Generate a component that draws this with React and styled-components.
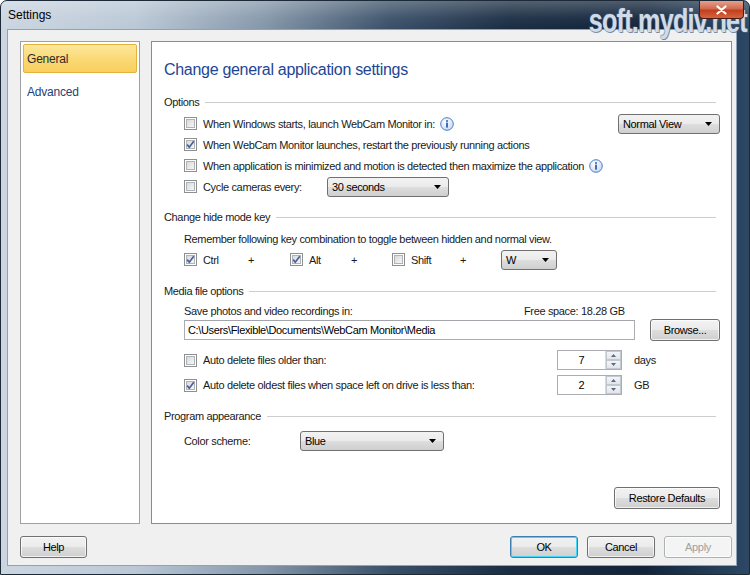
import React from "react";
import styled, { createGlobalStyle } from "styled-components";

const GlobalStyle = createGlobalStyle`
    html, body {
        margin: 0;
        padding: 0;
        background: #ffffff;
    }
    body {
        font-family: "Liberation Sans", Arial, sans-serif;
        font-size: 11px;
        letter-spacing: -0.35px;
        color: #1a1a1a;
    }
`;

const Window = styled.div`
    position: relative;
    width: 750px;
    height: 575px;
    box-sizing: border-box;
    display: flex;
    flex-direction: column;
    border: 1px solid #1c2a38;
    border-radius: 7px 7px 0 0;
    background: linear-gradient(
        90deg,
        #cbd6e1 0%,
        #bac8d6 18%,
        #8597aa 35%,
        #3a5068 52%,
        #1a2d43 68%,
        #12243a 86%,
        #2c4865 100%
    );
    overflow: hidden;
`;

const TitleBar = styled.div`
    height: 28px;
    display: flex;
    align-items: center;
    padding-left: 7px;
    font-size: 12px;
    letter-spacing: 0;
    color: #000;
    background: linear-gradient(
        180deg,
        rgba(255, 255, 255, 0.25) 0%,
        rgba(255, 255, 255, 0.05) 60%,
        rgba(0, 0, 0, 0) 100%
    );
`;

const Watermark = styled.div`
    position: absolute;
    top: 0;
    right: 2px;
    font-family: "Liberation Sans", Arial, sans-serif;
    font-weight: bold;
    font-size: 34px;
    letter-spacing: -1px;
    color: rgba(240, 245, 252, 0.82);
    text-shadow: 0 0 1px #4f6c8e, 1px 1px 0 rgba(70, 100, 130, 0.7), -1px -1px 0 rgba(70, 100, 130, 0.4);
    transform: scaleX(0.74);
    transform-origin: right center;
    pointer-events: none;
`;

const CloseButton = styled.div`
    position: absolute;
    top: 0;
    right: 5px;
    width: 45px;
    height: 18px;
    box-sizing: border-box;
    border: 1px solid #4a1b12;
    border-top: none;
    border-radius: 0 0 4px 4px;
    background: linear-gradient(180deg, #e6a08c 0%, #d26a4f 45%, #c0401f 55%, #d6643f 100%);
    display: flex;
    align-items: center;
    justify-content: center;
`;

const Client = styled.div`
    flex: 1;
    margin: 0 12px 8px 6px;
    background: #f0f0f0;
    border: 1px solid #8ea2b8;
    display: flex;
    flex-direction: column;
    padding: 11px 4px 0 12px;
`;

const MainRow = styled.div`
    height: 483px;
    display: flex;
    gap: 11px;
`;

const Nav = styled.div`
    width: 120px;
    box-sizing: border-box;
    background: #fff;
    border: 1px solid #a0a0a0;
    padding: 2px;
    display: flex;
    flex-direction: column;
    gap: 4px;
`;

const NavItem = styled.div`
    height: 29px;
    box-sizing: border-box;
    display: flex;
    align-items: center;
    padding-left: 3px;
    font-size: 12px;
    letter-spacing: -0.2px;
    border-radius: 2px;
    border: 1px solid ${(p) => (p.$active ? "#e3b13e" : "transparent")};
    background: ${(p) =>
        p.$active
            ? "linear-gradient(180deg, #fde79b 0%, #fbd977 50%, #f9cf5e 100%)"
            : "transparent"};
    color: ${(p) => (p.$active ? "#2a2a2a" : "#1f3f7a")};
`;

const Panel = styled.div`
    flex: 1;
    box-sizing: border-box;
    background: #fff;
    border: 1px solid #8c8c8c;
    padding: 18px 11px 14px 12px;
    display: flex;
    flex-direction: column;
`;

const Title = styled.div`
    height: 20px;
    line-height: 20px;
    font-size: 16px;
    letter-spacing: -0.3px;
    color: #1d4594;
    margin-bottom: 14px;
`;

const GroupHead = styled.div`
    height: 16px;
    display: flex;
    align-items: center;
    gap: 6px;
    margin-bottom: ${(p) => p.$after || 3}px;

    &::after {
        content: "";
        flex: 1;
        height: 1px;
        background: #cdcdcd;
        margin-right: 4px;
    }
`;

const Group = styled.div`
    display: flex;
    flex-direction: column;
    padding-left: 20px;
    margin-bottom: ${(p) => p.$after || 0}px;
`;

const Row = styled.div`
    height: ${(p) => p.$h || 21}px;
    display: flex;
    align-items: center;
    margin-top: ${(p) => p.$top || 0}px;
`;

const CheckLabel = styled.label`
    display: flex;
    align-items: center;
    gap: 6px;
    width: ${(p) => (p.$w ? `${p.$w}px` : "auto")};
    flex-shrink: 0;
`;

const Info = styled.span`
    display: inline-flex;
    margin-left: 5px;
`;

const Spacer = styled.div`
    flex: 1;
`;

const ComboBox = styled.div`
    width: ${(p) => p.$w}px;
    height: 20px;
    box-sizing: border-box;
    border: 1px solid #707070;
    border-radius: 3px;
    background: linear-gradient(180deg, #f2f2f2 0%, #ebebeb 48%, #dddddd 52%, #cfcfcf 100%);
    display: flex;
    align-items: center;
    padding: 0 7px 0 4px;
    color: #000;
    flex-shrink: 0;
`;

const ComboText = styled.span`
    flex: 1;
`;

const Plus = styled.div`
    width: 26px;
    text-align: center;
    margin-right: ${(p) => p.$after}px;
`;

const TextBox = styled.div`
    width: 451px;
    height: 20px;
    box-sizing: border-box;
    border: 1px solid #abadb3;
    border-top-color: #a3a5ab;
    background: #fff;
    display: flex;
    align-items: center;
    padding-left: 3px;
    color: #000;
`;

const Button = styled.div`
    width: ${(p) => p.$w}px;
    height: 22px;
    box-sizing: border-box;
    border: 1px solid ${(p) => (p.$focus ? "#3c7fb1" : p.$disabled ? "#adb2b5" : "#707070")};
    border-radius: 3px;
    background: ${(p) =>
        p.$disabled
            ? "#f4f4f4"
            : "linear-gradient(180deg, #f2f2f2 0%, #ebebeb 48%, #dddddd 52%, #cfcfcf 100%)"};
    box-shadow: ${(p) => (p.$focus ? "inset 0 0 0 1px #48d4f5" : "inset 0 0 0 1px rgba(255,255,255,0.7)")};
    color: ${(p) => (p.$disabled ? "#a0a0a0" : "#000")};
    display: flex;
    align-items: center;
    justify-content: center;
    flex-shrink: 0;
`;

const Spinner = styled.div`
    width: 65px;
    height: 20px;
    box-sizing: border-box;
    border: 1px solid #abadb3;
    background: #fff;
    display: flex;
    flex-shrink: 0;
`;

const SpinValue = styled.div`
    flex: 1;
    display: flex;
    align-items: center;
    justify-content: center;
    color: #000;
`;

const SpinButtons = styled.div`
    width: 15px;
    display: flex;
    flex-direction: column;
    border-left: 1px solid #d5d9de;
`;

const SpinButton = styled.div`
    flex: 1;
    display: flex;
    align-items: center;
    justify-content: center;
    background: linear-gradient(180deg, #f3f5f8 0%, #e1e5ea 100%);
    border: 1px solid #c2c8cf;
`;

const Unit = styled.span`
    margin-left: 12px;
`;

const Footer = styled.div`
    margin-top: auto;
    display: flex;
    justify-content: flex-end;
`;

const BottomRow = styled.div`
    display: flex;
    align-items: center;
    gap: 9px;
    margin-top: 12px;
`;

const CheckBox = ({ checked }) => (
    <svg width="13" height="13" viewBox="0 0 13 13">
        <defs>
            <linearGradient id={`cbg${checked ? 1 : 0}`} x1="0" y1="0" x2="1" y2="1">
                <stop offset="0" stopColor="#d8d8d8" />
                <stop offset="1" stopColor="#f8f8f8" />
            </linearGradient>
        </defs>
        <rect x="0.5" y="0.5" width="12" height="12" fill="#fff" stroke="#8e8f8f" />
        <rect x="2.5" y="2.5" width="8" height="8" fill={`url(#cbg${checked ? 1 : 0})`} stroke="#aeb3b9" strokeWidth="1" />
        {checked && (
            <path d="M3.2 6.6 L5.3 9.2 L9.8 3.2" fill="none" stroke="#4a5f9c" strokeWidth="1.7" />
        )}
    </svg>
);

const InfoIcon = () => (
    <svg width="14" height="14" viewBox="0 0 14 14">
        <defs>
            <radialGradient id="infoG" cx="0.4" cy="0.35" r="0.7">
                <stop offset="0" stopColor="#ffffff" />
                <stop offset="1" stopColor="#c7d9f2" />
            </radialGradient>
        </defs>
        <circle cx="7" cy="7" r="6.3" fill="url(#infoG)" stroke="#4d7cc4" strokeWidth="1" />
        <rect x="6.1" y="5.6" width="1.8" height="5" fill="#2f5fae" />
        <circle cx="7" cy="3.9" r="1" fill="#2f5fae" />
    </svg>
);

const DownArrow = () => (
    <svg width="7" height="4" viewBox="0 0 7 4">
        <path d="M0 0 H7 L3.5 4 Z" fill="#000" />
    </svg>
);

const SmallArrow = ({ up }) => (
    <svg width="5" height="3" viewBox="0 0 5 3">
        <path d={up ? "M0 3 H5 L2.5 0 Z" : "M0 0 H5 L2.5 3 Z"} fill="#5a6a80" />
    </svg>
);

const Combo = ({ width, value }) => (
    <ComboBox $w={width}>
        <ComboText>{value}</ComboText>
        <DownArrow />
    </ComboBox>
);

const Spin = ({ value }) => (
    <Spinner>
        <SpinValue>{value}</SpinValue>
        <SpinButtons>
            <SpinButton>
                <SmallArrow up />
            </SpinButton>
            <SpinButton>
                <SmallArrow />
            </SpinButton>
        </SpinButtons>
    </Spinner>
);

const App = () => {
    return (
        <>
            <GlobalStyle />
            <Window>
                <TitleBar>Settings</TitleBar>
                <Watermark>soft.mydiv.net</Watermark>
                <CloseButton>
                    <svg width="11" height="10" viewBox="0 0 11 10">
                        <path d="M1.5 1.5 L9.5 8.5 M9.5 1.5 L1.5 8.5" stroke="#fff" strokeWidth="2.2" strokeLinecap="round" />
                    </svg>
                </CloseButton>
                <Client>
                    <MainRow>
                        <Nav>
                            <NavItem $active>General</NavItem>
                            <NavItem>Advanced</NavItem>
                        </Nav>
                        <Panel>
                            <Title>Change general application settings</Title>

                            <GroupHead>Options</GroupHead>
                            <Group $after={12}>
                                <Row>
                                    <CheckLabel>
                                        <CheckBox />
                                        When Windows starts, launch WebCam Monitor in:
                                    </CheckLabel>
                                    <Info>
                                        <InfoIcon />
                                    </Info>
                                    <Spacer />
                                    <Combo width={102} value="Normal View" />
                                </Row>
                                <Row>
                                    <CheckLabel>
                                        <CheckBox checked />
                                        When WebCam Monitor launches, restart the previously running actions
                                    </CheckLabel>
                                </Row>
                                <Row>
                                    <CheckLabel>
                                        <CheckBox />
                                        When application is minimized and motion is detected then maximize the application
                                    </CheckLabel>
                                    <Info>
                                        <InfoIcon />
                                    </Info>
                                </Row>
                                <Row>
                                    <CheckLabel $w={143}>
                                        <CheckBox />
                                        Cycle cameras every:
                                    </CheckLabel>
                                    <Combo width={122} value="30 seconds" />
                                </Row>
                            </Group>

                            <GroupHead>Change hide mode key</GroupHead>
                            <Group $after={13}>
                                <Row>Remember following key combination to toggle between hidden and normal view.</Row>
                                <Row>
                                    <CheckLabel $w={54}>
                                        <CheckBox checked />
                                        Ctrl
                                    </CheckLabel>
                                    <Plus $after={26}>+</Plus>
                                    <CheckLabel $w={51}>
                                        <CheckBox checked />
                                        Alt
                                    </CheckLabel>
                                    <Plus $after={25}>+</Plus>
                                    <CheckLabel $w={58}>
                                        <CheckBox />
                                        Shift
                                    </CheckLabel>
                                    <Plus $after={25}>+</Plus>
                                    <Combo width={56} value="W" />
                                </Row>
                            </Group>

                            <GroupHead>Media file options</GroupHead>
                            <Group $after={13}>
                                <Row $h={18}>
                                    <CheckLabel $w={340}>Save photos and video recordings in:</CheckLabel>
                                    Free space: 18.28 GB
                                </Row>
                                <Row $h={20}>
                                    <TextBox>C:\Users\Flexible\Documents\WebCam Monitor\Media</TextBox>
                                    <Spacer />
                                    <Button $w={70}>Browse...</Button>
                                </Row>
                                <Row $h={20} $top={10}>
                                    <CheckLabel $w={373}>
                                        <CheckBox />
                                        Auto delete files older than:
                                    </CheckLabel>
                                    <Spin value="7" />
                                    <Unit>days</Unit>
                                </Row>
                                <Row $h={20} $top={5}>
                                    <CheckLabel $w={373}>
                                        <CheckBox checked />
                                        Auto delete oldest files when space left on drive is less than:
                                    </CheckLabel>
                                    <Spin value="2" />
                                    <Unit>GB</Unit>
                                </Row>
                            </Group>

                            <GroupHead $after={7}>Program appearance</GroupHead>
                            <Group>
                                <Row $h={20}>
                                    <CheckLabel $w={116}>Color scheme:</CheckLabel>
                                    <Combo width={144} value="Blue" />
                                </Row>
                            </Group>

                            <Footer>
                                <Button $w={106}>Restore Defaults</Button>
                            </Footer>
                        </Panel>
                    </MainRow>
                    <BottomRow>
                        <Button $w={67}>Help</Button>
                        <Spacer />
                        <Button $w={68} $focus>
                            OK
                        </Button>
                        <Button $w={68}>Cancel</Button>
                        <Button $w={68} $disabled>
                            Apply
                        </Button>
                    </BottomRow>
                </Client>
            </Window>
        </>
    );
};

export default App;
